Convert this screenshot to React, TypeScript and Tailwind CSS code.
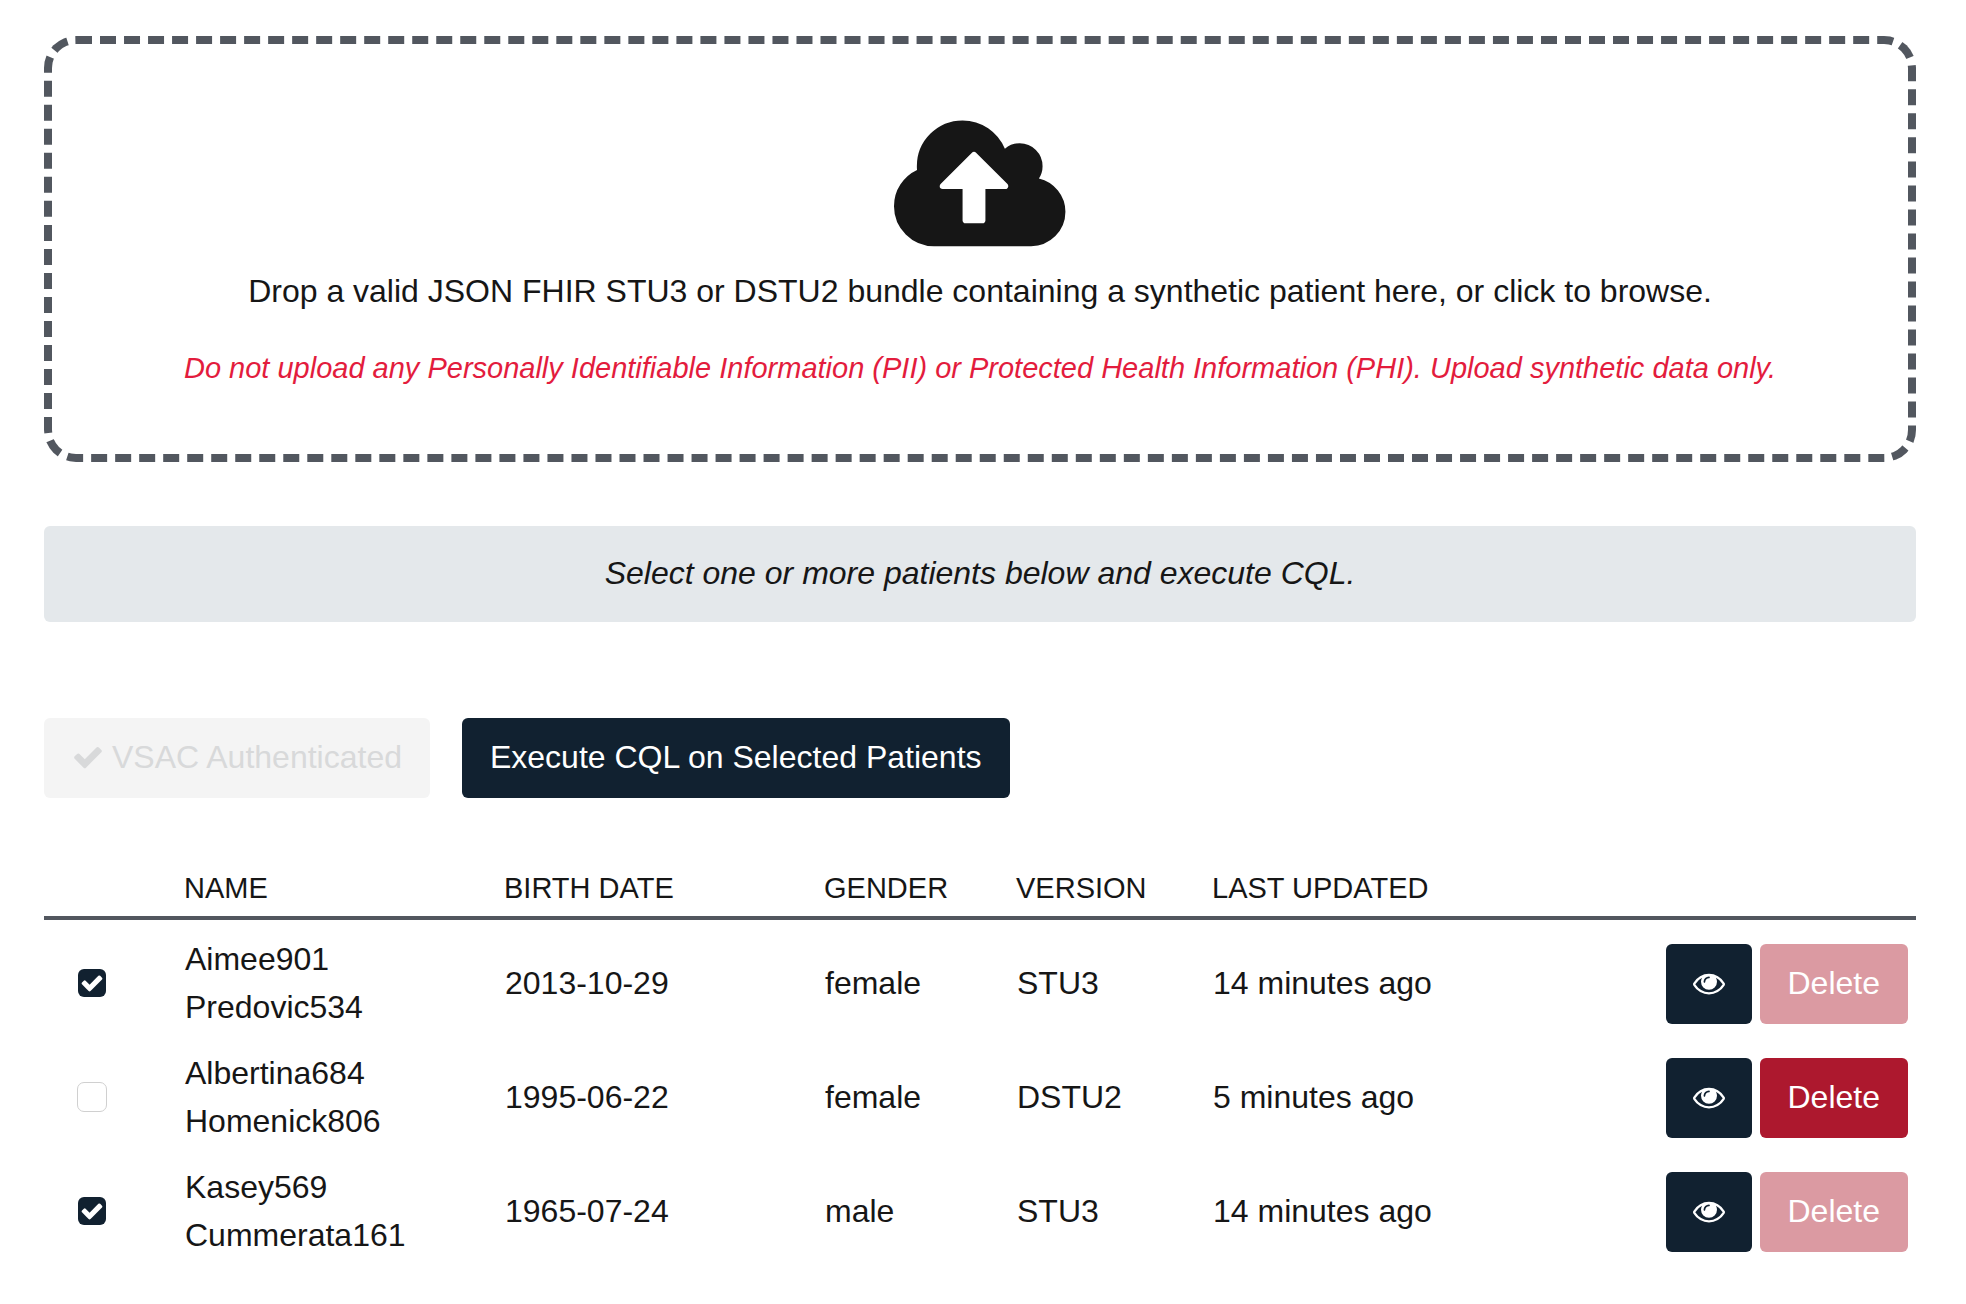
import { useState } from "react";

type Patient = {
  first: string;
  last: string;
  birthDate: string;
  gender: string;
  version: string;
  updated: string;
  selected: boolean;
};

const initialPatients: Patient[] = [
  { first: "Aimee901", last: "Predovic534", birthDate: "2013-10-29", gender: "female", version: "STU3", updated: "14 minutes ago", selected: true },
  { first: "Albertina684", last: "Homenick806", birthDate: "1995-06-22", gender: "female", version: "DSTU2", updated: "5 minutes ago", selected: false },
  { first: "Kasey569", last: "Cummerata161", birthDate: "1965-07-24", gender: "male", version: "STU3", updated: "14 minutes ago", selected: true },
];

function CloudUploadIcon({ className }: { className?: string }) {
  return (
    <svg viewBox="0 0 1920 1792" fill="currentColor" fillRule="evenodd" className={className} aria-hidden="true">
      <path d="M1280 864q0-14-9-23l-352-352q-9-9-23-9t-23 9l-351 351q-10 12-10 24 0 14 9 23t23 9h224v352q0 13 9.500 22.500t22.500 9.500h192q13 0 22.500-9.500t9.500-22.500v-352h224q13 0 22.500-9.500t9.500-22.500zM1920 1152q0 159-112.500 271.500t-271.500 112.500h-1088q-185 0-316.500-131.500t-131.500-316.500q0-132 71-241.500t187-163.500q-2-28-2-43 0-212 150-362t362-150q158 0 286.500 88t187.500 230q70-62 166-62 106 0 181 75t75 181q0 75-41 138 129 30 213 134.500t84 239.500z" />
    </svg>
  );
}

function CheckIcon({ className }: { className?: string }) {
  return (
    <svg viewBox="0 0 1792 1792" fill="currentColor" className={className} aria-hidden="true">
      <path d="M1671 566q0 40-28 68l-724 724-136 136q-28 28-68 28t-68-28l-136-136-362-362q-28-28-28-68t28-68l136-136q28-28 68-28t68 28l294 295 656-657q28-28 68-28t68 28l136 136q28 28 28 68z" />
    </svg>
  );
}

function EyeIcon({ className }: { className?: string }) {
  return (
    <svg viewBox="0 0 1792 1792" fill="currentColor" className={className} aria-hidden="true">
      <path d="M1664 960q-152-236-381-353 61 104 61 225 0 185-131.500 316.500t-316.500 131.500-316.500-131.500-131.500-316.500q0-121 61-225-229 117-381 353 133 205 333.500 326.500t434.500 121.500 434.500-121.500 333.500-326.500zm-720-384q0-20-14-34t-34-14q-125 0-214.500 89.500t-89.500 214.500q0 20 14 34t34 14 34-14 14-34q0-86 61-147t147-61q20 0 34-14t14-34zm848 384q0 34-20 69-140 230-376.500 368.500t-499.500 138.500-499.500-139-376.500-368q-20-35-20-69t20-69q140-229 376.500-368t499.500-139 499.500 139 376.500 368q20 35 20 69z" />
    </svg>
  );
}

export default function App() {
  const [patients, setPatients] = useState(initialPatients);

  const toggle = (index: number) =>
    setPatients((rows) => rows.map((p, i) => (i === index ? { ...p, selected: !p.selected } : p)));

  return (
    <main className="min-h-screen bg-white pt-9 pr-[50px] pb-12 pl-11 font-['Liberation_Sans',Arial,sans-serif] text-[32px] leading-[48px] text-[#161616]">
      <label className="flex cursor-pointer flex-col items-center rounded-[32px] border-8 border-dashed border-[#52575f] pt-[65px] pb-16 text-center leading-[44px]">
        <input type="file" accept="application/json" className="sr-only" />
        <CloudUploadIcon className="h-40 w-auto" />
        <span>Drop a valid JSON FHIR STU3 or DSTU2 bundle containing a synthetic patient here, or click to browse.</span>
        <span className="mt-[33px] text-[29px] text-[#e31c3d] italic">
          Do not upload any Personally Identifiable Information (PII) or Protected Health Information (PHI). Upload synthetic data only.
        </span>
      </label>

      <p className="mt-16 rounded-md bg-[#e4e8eb] pt-[23px] pb-[25px] text-center italic">Select one or more patients below and execute CQL.</p>

      <div className="mt-24 flex gap-8">
        <button type="button" disabled className="flex items-center gap-2 rounded-md bg-[#f4f4f4] px-7 pt-[15px] pb-[17px] text-[#d8d9da]">
          <CheckIcon className="size-8" />
          VSAC Authenticated
        </button>
        <button type="button" className="rounded-md bg-[#112130] px-7 pt-[15px] pb-[17px] text-white">
          Execute CQL on Selected Patients
        </button>
      </div>

      <table className="mt-[54px] w-full table-fixed border-separate border-spacing-x-0 border-spacing-y-[14px] text-left">
        <thead>
          <tr className="text-[29px] leading-[44px] uppercase *:border-b-4 *:border-[#52575f] *:px-2 *:pb-1.5 *:font-normal">
            <th className="w-[132px]" aria-label="Selected" />
            <th className="w-80">Name</th>
            <th className="w-80">Birth Date</th>
            <th className="w-48">Gender</th>
            <th className="w-[196px]">Version</th>
            <th>Last Updated</th>
            <th className="w-[280px]" aria-label="Actions" />
          </tr>
        </thead>
        <tbody>
          {patients.map((p, i) => (
            <tr key={p.last} className="*:px-[9px] *:pt-px *:pb-[3px]">
              <td>
                <span className="relative ml-6 flex size-[30px]">
                  <input
                    type="checkbox"
                    checked={p.selected}
                    onChange={() => toggle(i)}
                    aria-label={`Select ${p.first} ${p.last}`}
                    className="size-[30px] appearance-none rounded-[7px] border border-[#d0d0d0] bg-white bg-clip-padding checked:border-transparent checked:bg-[#112130]"
                  />
                  {p.selected && <CheckIcon className="pointer-events-none absolute inset-0 m-auto size-6 text-white" />}
                </span>
              </td>
              <td>
                {p.first}
                <br />
                {p.last}
              </td>
              <td>{p.birthDate}</td>
              <td>{p.gender}</td>
              <td>{p.version}</td>
              <td>{p.updated}</td>
              <td className="py-0.5! pr-2!">
                <div className="flex justify-end gap-2">
                  <button type="button" aria-label={`View ${p.first} ${p.last}`} className="flex items-center rounded-md bg-[#112130] px-[27px] pt-[15px] pb-[17px] text-white">
                    <span className="flex h-12 items-center">
                      <EyeIcon className="size-8" />
                    </span>
                  </button>
                  <button type="button" disabled={p.selected} className="rounded-md bg-[#ad182e] px-7 pt-[15px] pb-[17px] text-white disabled:bg-[#db9aa2]">
                    Delete
                  </button>
                </div>
              </td>
            </tr>
          ))}
        </tbody>
      </table>
    </main>
  );
}
